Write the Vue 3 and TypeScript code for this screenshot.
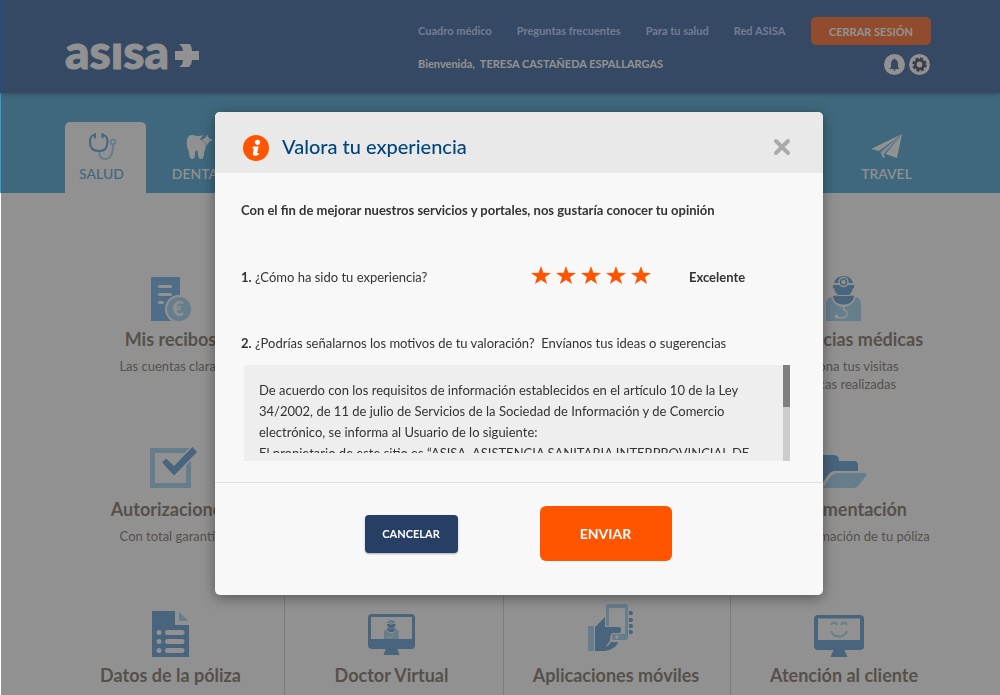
<script setup lang="ts">
import { ref } from 'vue'

interface Tile {
  id: string
  title: string
  lines: string[]
}

const links: string[] = ['Cuadro médico', 'Preguntas frecuentes', 'Para tu salud', 'Red ASISA']

const tiles: Tile[] = [
  { id: 'recibos', title: 'Mis recibos', lines: ['Las cuentas claras'] },
  { id: 'medicas', title: 'Asistencias médicas', lines: ['Gestiona tus visitas', 'médicas realizadas'] },
  { id: 'autorizaciones', title: 'Autorizaciones', lines: ['Con total garantía'] },
  { id: 'documentacion', title: 'Documentación', lines: ['Ver la información de tu póliza'] },
  { id: 'datos', title: 'Datos de la póliza', lines: [] },
  { id: 'doctor', title: 'Doctor Virtual', lines: [] },
  { id: 'apps', title: 'Aplicaciones móviles', lines: [] },
  { id: 'cliente', title: 'Atención al cliente', lines: [] },
]

const ratings: string[] = ['Muy mala', 'Mala', 'Normal', 'Buena', 'Excelente']
const rating = ref<number>(5)
const open = ref<boolean>(true)
const comments = ref<string>(
  [
    'De acuerdo con los requisitos de información establecidos en el artículo 10 de la Ley',
    '34/2002, de 11 de julio de Servicios de la Sociedad de Información y de Comercio',
    'electrónico, se informa al Usuario de lo siguiente:',
    'El propietario de este sitio es “ASISA, ASISTENCIA SANITARIA INTERPROVINCIAL DE',
  ].join('\n'),
)
</script>

<template>
  <div class="page">
    <header class="top">
      <a class="logo" href="#" aria-label="asisa">
        <span class="logo-name">asısa</span>
        <svg class="logo-mark" viewBox="0 0 24 23" aria-hidden="true">
          <path d="M4 0H15Q17 3 17 7H24V16H17Q17 20 14 23H4Q8 21 8 16H0V7H8Q8 3 4 0Z" fill="#fff" />
        </svg>
      </a>
      <div class="account">
        <nav class="links">
          <a v-for="link in links" :key="link" href="#">{{ link }}</a>
        </nav>
        <p class="welcome">Bienvenida,&nbsp; TERESA CASTAÑEDA ESPALLARGAS</p>
      </div>
      <div class="session">
        <button type="button" class="logout">CERRAR SESIÓN</button>
        <div class="round-buttons">
          <button type="button" aria-label="Avisos">
            <svg viewBox="0 0 21 21">
              <circle cx="10.5" cy="10.5" r="10.5" fill="#fff" />
              <path d="M10.5 4.500Q11.500 4.500 11.400 5.600Q14 6.500 14 10V13L15.500 15H5.500L7 13V10Q7 6.500 9.600 5.600Q9.500 4.500 10.500 4.500ZM9 15.600H12Q11.700 17 10.500 17T9 15.600Z" fill="#1f4e90" />
            </svg>
          </button>
          <button type="button" aria-label="Ajustes">
            <svg viewBox="0 0 21 21">
              <circle cx="10.5" cy="10.5" r="10.5" fill="#fff" />
              <circle cx="10.5" cy="10.5" r="4.300" fill="none" stroke="#20324f" stroke-width="2.800" />
              <circle cx="10.5" cy="10.5" r="6.200" fill="none" stroke="#20324f" stroke-width="2" stroke-dasharray="2.870 2" />
            </svg>
          </button>
        </div>
      </div>
    </header>

    <nav class="tabs">
      <a class="tab active" href="#">
        <svg class="tab-icon" viewBox="0 0 28 28" fill="none" stroke-linecap="round">
          <path d="M10 18Q10 26 16 26Q24 26 24 12" stroke="#97cef3" stroke-width="2" />
          <circle cx="24" cy="9" r="2.300" stroke="#97cef3" stroke-width="1.800" />
          <path d="M6 2.500H3.500Q1 4 1 9Q1 18 10 18Q18.500 18 18.500 9Q18.500 4 16 2.500H13.500M6 1V4.500M13.500 1V4.500" stroke="#379cd0" stroke-width="2" />
        </svg>
        <span>SALUD</span>
      </a>
      <a class="tab" href="#">
        <svg class="tab-icon" viewBox="0 0 28 28" fill="#fff">
          <path d="M2 4Q4 1 9 2.500Q13 4 17 2L14 6.500L19 9.500L20 13Q19 17 18 20Q18 26 15 26Q12 26 12 21Q12 17.500 10.500 17.500T9 21Q9 26 6 26Q3 26 3 19Q0 13 1 7Z" />
          <path d="M21 1Q21.500 5.500 27 7Q22 8.500 21 13Q20 8.500 15 7Q20.500 5.500 21 1Z" />
        </svg>
        <span>DENTAL</span>
      </a>
      <a class="tab last" href="#">
        <svg class="tab-icon plane" viewBox="0 0 32 28" fill="#fff">
          <path d="M0 16L31 1L8 18Z" />
          <path d="M31 1L9.500 19L12 25L14 24.500L13 21L29 3Z" opacity=".85" />
          <path d="M31 1L26 25L14.500 21Z" />
        </svg>
        <span>TRAVEL</span>
      </a>
    </nav>

    <main class="tiles">
      <a v-for="tile in tiles" :key="tile.id" class="tile" :class="tile.id" href="#">
        <span class="tile-icon">
          <svg v-if="tile.id === 'recibos'" width="40" height="44" viewBox="0 0 40 44">
            <path d="M0 1Q0 0 1 0H28Q29 0 29 1V44H0Z" fill="#5fa6e6" />
            <path d="M8.500 9.500H19.500M8.500 17.500H19.500M8.500 25.500H11.500" stroke="#fff" stroke-width="3" stroke-linecap="round" />
            <circle cx="28" cy="32" r="13" fill="#97cef3" stroke="#fff" stroke-width="2" />
            <text x="27" y="39" text-anchor="middle" font-family="Lato, sans-serif" font-size="20" font-weight="700" fill="#fff">€</text>
          </svg>
          <svg v-else-if="tile.id === 'medicas'" width="36" height="45" viewBox="0 0 36 45">
            <use href="#doctor-figure" />
          </svg>
          <svg v-else-if="tile.id === 'autorizaciones'" class="raised" width="53" height="42" viewBox="-6 0 53 42">
            <rect x="2.500" y="3.500" width="36" height="35" fill="none" stroke="#97cef3" stroke-width="5" />
            <path d="M12 15.500L16 11.500L24 19L42.500 0L47 5L24 28.500Z" fill="#5090ce" stroke="#fff" stroke-width="3" paint-order="stroke" />
          </svg>
          <svg v-else-if="tile.id === 'documentacion'" class="raised" width="46" height="34" viewBox="0 0 46 34">
            <path d="M0 30V3Q0 0 3 0H13Q18 0 18 6H33Q37 6 37 10V16H14Q10 16 7 20L0 30Z" fill="#5090ce" />
            <path d="M2 33L10 21Q13 18 16 18H43Q47 18 45 21L37 31Q35 33 32 33Z" fill="#97cef3" />
          </svg>
          <svg v-else-if="tile.id === 'datos'" width="37" height="46" viewBox="0 0 37 46">
            <path d="M0 0H23V14H37V46H0Z" fill="#5090ce" />
            <path d="M27 1L36.500 10H27Z" fill="#97cef3" />
            <g stroke="#fff" stroke-width="5" stroke-linecap="round">
              <path d="M7 21.500H7.010M15.500 21.500H30M7 30.500H7.010M15.500 30.500H30M7 39.500H7.010M15.500 39.500H30" />
            </g>
          </svg>
          <svg v-else-if="tile.id === 'doctor'" class="raised" width="47" height="41" viewBox="0 0 47 41">
            <rect width="47" height="35" rx="4" fill="#5090ce" />
            <path d="M18 34H29L31.500 41H15.500Z" fill="#5090ce" />
            <rect x="3" y="3" width="41" height="22" fill="#fff" />
            <svg x="16" y="6" width="15" height="19" viewBox="0 0 36 45"><use href="#doctor-figure" /></svg>
          </svg>
          <svg v-else-if="tile.id === 'apps'" class="raised-more" width="46" height="47" viewBox="0 0 46 47">
            <rect x="0" y="22" width="6" height="25" rx="1" fill="#97cef3" />
            <path d="M7 23L17 13V23H31Q33 23 33 26T31 29H24Q22 31 22 37L18 42Q20 43 23 38H30Q29 42 25 44Q21 47 17 47H7Z" fill="#5090ce" />
            <path d="M20 0H37Q40 0 40 3V33Q40 36 37 36H24V30H32Q34 29 34 26Q34 22 31 22H18V2Q18 0 20 0Z" fill="#97cef3" />
            <path d="M21 4H37V30H32Q34 29 34 26Q34 22 31 22H21Z" fill="#fff" />
            <circle cx="29" cy="33" r="1.800" fill="#fff" />
            <path d="M41 7H43A2 2 0 0 1 43 11H41ZM41 14H43A2 2 0 0 1 43 18H41ZM41 20H43A2 2 0 0 1 43 24H41ZM41 26H43A2 2 0 0 1 43 30H41Z" fill="#5090ce" />
          </svg>
          <svg v-else width="50" height="42" viewBox="0 0 50 42">
            <rect width="50" height="35" rx="4" fill="#5090ce" />
            <path d="M20 34H30L33.500 42H16.500Z" fill="#5090ce" />
            <rect x="4" y="3.500" width="42" height="21.500" fill="#fff" />
            <path d="M17.500 10Q17.500 7.500 20 7.500T22.500 10M27.500 10Q27.500 7.500 30 7.500T32.500 10M17 16Q19 21.500 25 21.500T33 16" fill="none" stroke="#97cef3" stroke-width="2" />
          </svg>
        </span>
        <strong>{{ tile.title }}</strong>
        <span v-for="line in tile.lines" :key="line" class="tile-line">{{ line }}</span>
      </a>
    </main>

    <svg class="symbols" aria-hidden="true">
      <defs>
        <g id="doctor-figure">
          <path d="M0 45V28Q0 22 6 21H29Q35 22 35 28V45Z" fill="#97cef3" />
          <circle cx="17.500" cy="18.500" r="12.500" fill="#fff" />
          <path d="M8 7Q10 0 17.500 0T27 7Z" fill="#5090ce" />
          <path d="M7 9H28V12H27Q26 17 23 19H12Q9 17 8 12H7Z" fill="#5090ce" />
          <path d="M7 20Q12 19 12 20H23Q25 19 28 20Q28 24 24 27Q17.500 30 11 27Q7 24 7 20Z" fill="#5090ce" />
          <circle cx="17.500" cy="6" r="4.500" fill="#5090ce" stroke="#fff" stroke-width="1.500" />
          <circle cx="17.500" cy="6" r="2.200" fill="#fff" />
          <path d="M17.500 31Q17 34 20 35Q23 38 19 41Q15 43 11 41" fill="none" stroke="#fff" stroke-width="1.500" />
          <circle cx="10.500" cy="40.500" r="2" fill="#fff" />
        </g>
      </defs>
    </svg>

    <div v-if="open" class="overlay">
      <form class="dialog" role="dialog" aria-labelledby="dialog-title" @submit.prevent="open = false">
        <div class="dialog-head">
          <svg class="info" viewBox="0 0 25 25" aria-hidden="true">
            <circle cx="12.500" cy="12.500" r="12.500" fill="#ff5500" />
            <circle cx="14" cy="7" r="2.500" fill="#fff" />
            <path d="M9.500 11H15L13.500 17.500H15.500L15 19Q13.500 20 11.500 20Q9 20 9.500 17.500L10.500 13H9Z" fill="#fff" />
          </svg>
          <h1 id="dialog-title">Valora tu experiencia</h1>
          <button type="button" class="close" aria-label="Cerrar" @click="open = false">
            <svg viewBox="0 0 20 20"><path d="M4 4L16 16M16 4L4 16" stroke="#ababab" stroke-width="4" stroke-linecap="round" /></svg>
          </button>
        </div>
        <div class="dialog-body">
          <p class="intro">Con el fin de mejorar nuestros servicios y portales, nos gustaría conocer tu opinión</p>
          <div class="question" role="radiogroup" aria-labelledby="q-rating">
            <span id="q-rating" class="question-text"><b>1.</b> ¿Cómo ha sido tu experiencia?</span>
            <span class="stars">
              <label v-for="(name, i) in ratings" :key="name" :class="{ on: i < rating }">
                <input v-model="rating" type="radio" name="rating" :value="i + 1" :aria-label="name" />
                <svg viewBox="0 0 20 18"><path d="M10 0L12.400 6.800L20 6.900L13.900 11.200L16.100 18L10 13.900L3.900 18L6.100 11.200L0 6.900L7.600 6.800Z" fill="currentColor" /></svg>
              </label>
            </span>
            <output class="rating-name">{{ ratings[rating - 1] }}</output>
          </div>
          <label class="comment-label" for="comments"><b>2.</b> ¿Podrías señalarnos los motivos de tu valoración?&nbsp; Envíanos tus ideas o sugerencias</label>
          <div class="comment-box">
            <textarea id="comments" v-model="comments" spellcheck="false"></textarea>
            <div class="track"><div class="thumb"></div></div>
          </div>
        </div>
        <div class="dialog-foot">
          <button type="button" class="cancel" @click="open = false">CANCELAR</button>
          <button type="submit" class="send">ENVIAR</button>
        </div>
      </form>
    </div>
  </div>
</template>

<style>
body {
  margin: 0;
  overflow: hidden;
}
</style>

<style scoped>
.page {
  min-height: 100vh;
  background: #fff;
  font-family: Lato, "Open Sans", sans-serif;
  font-size: 13px;
  color: #333;
}
.page * {
  box-sizing: border-box;
}
button {
  font-family: inherit;
  border: 0;
  padding: 0;
  cursor: pointer;
}
a {
  color: inherit;
  text-decoration: none;
}
svg {
  display: block;
}
.symbols {
  position: absolute;
  width: 0;
  height: 0;
}

.top {
  position: relative;
  z-index: 1;
  display: grid;
  grid-template-columns: 353px 1fr 120px;
  height: 93px;
  padding: 17px 69px 0 65px;
  background: #1f4e90;
  box-shadow: 0 1px 4px rgba(0, 0, 0, 0.5);
  color: #fff;
}
.logo {
  display: flex;
  align-items: flex-start;
  align-self: start;
  gap: 6px;
  padding-top: 22px;
}
.logo-name {
  font-size: 48px;
  font-weight: 900;
  line-height: 24px;
  padding-bottom: 9px;
  -webkit-text-stroke: 1px #fff;
}
.logo-mark {
  width: 24px;
  height: 23px;
  margin-top: 5px;
}
.account {
  font-size: 11px;
  font-weight: 700;
}
.links {
  display: flex;
  gap: 25px;
  line-height: 28px;
  color: #b0cbfc;
}
.welcome {
  margin: 5px 0 0;
  line-height: 28px;
}
.logout {
  display: block;
  width: 100%;
  height: 28px;
  border-radius: 5px;
  background: #ff570b;
  color: #fff;
  font-size: 11px;
  font-weight: 700;
}
.round-buttons {
  display: flex;
  justify-content: flex-end;
  gap: 4px;
  margin-top: 9px;
  padding-right: 1px;
}
.round-buttons button {
  width: 21px;
  height: 21px;
  background: none;
}

.tabs {
  display: flex;
  align-items: flex-end;
  gap: 16px;
  height: 100px;
  padding: 0 73px 0 65px;
  background: #379cd0;
  color: #fff;
}
.tab {
  display: flex;
  flex-direction: column;
  align-items: center;
  width: 81px;
  height: 71px;
  padding-top: 11px;
  border-radius: 5px 5px 0 0;
  font-size: 14px;
  font-weight: 500;
  line-height: 26px;
}
.tab span {
  margin-right: 8px;
}
.tab.active {
  background: #fff;
  color: #379cd0;
}
.tab.last {
  margin-left: auto;
}
.tab.last span {
  margin-right: 0;
}
.tab-icon {
  width: 28px;
  height: 28px;
  margin-left: -6px;
}
.tab-icon.plane {
  width: 32px;
  margin-left: 0;
}

.tiles {
  display: grid;
  grid-template-columns: 227fr 219fr 227fr 227fr;
  grid-template-rows: 170px 166px 112px;
  padding: 54px 43px 0 57px;
}
.tile {
  display: flex;
  flex-direction: column;
  align-items: center;
  padding-top: 20px;
  white-space: nowrap;
  color: #705f52;
  font-size: 13px;
}
.tile-icon {
  display: flex;
  align-items: flex-end;
  height: 54px;
  margin-bottom: 6px;
}
.tile strong {
  font-size: 18px;
  line-height: 24px;
  margin-bottom: 6px;
}
.tile-line {
  line-height: 18px;
}
.recibos { grid-area: 1 / 1; }
.medicas { grid-area: 1 / 4; }
.autorizaciones { grid-area: 2 / 1; }
.documentacion { grid-area: 2 / 4; }
.datos { grid-area: 3 / 1; }
.doctor { grid-area: 3 / 2; }
.apps { grid-area: 3 / 3; }
.cliente { grid-area: 3 / 4; }
.doctor,
.apps,
.cliente {
  border-left: 1px solid #ccc;
}
.doctor {
  padding-right: 5px;
}
.apps {
  padding-right: 2px;
}
.apps .tile-icon,
.cliente .tile-icon {
  padding-right: 10px;
}
.raised {
  margin-bottom: 2px;
}
.raised-more {
  margin-bottom: 6px;
}

.overlay {
  position: fixed;
  inset: 0 0 0 1px;
  display: flex;
  justify-content: center;
  align-items: flex-start;
  padding: 112px 0 0 37px;
  background: rgba(70, 70, 70, 0.594);
  z-index: 2;
}
.dialog {
  width: 608px;
  max-width: 100%;
  border-radius: 5px;
  background: #f8f8f8;
  box-shadow: 0 3px 14px rgba(0, 0, 0, 0.4);
  overflow: hidden;
}
.dialog-head {
  display: flex;
  align-items: center;
  height: 61px;
  padding: 10px 31px 0 28px;
  background: #e9e9e9;
}
.info {
  width: 26px;
  height: 26px;
}
h1 {
  flex: 1;
  margin: 0 0 3px 13px;
  font-size: 20px;
  font-weight: 500;
  line-height: 28px;
  color: #00457c;
}
.close {
  width: 20px;
  height: 20px;
  margin-bottom: 2px;
  background: none;
}
.dialog-body {
  padding: 24px 27px 21px 26px;
  line-height: 26px;
}
.intro {
  margin: 0 0 41px;
  font-weight: 700;
}
.question {
  display: flex;
  align-items: center;
  margin-bottom: 40px;
}
.question-text {
  width: 290px;
}
.stars {
  display: flex;
  gap: 5px;
  width: 158px;
  color: #ccc;
}
.stars label {
  position: relative;
  width: 20px;
  height: 22px;
}
.stars label.on {
  color: #ff5500;
}
.stars input {
  position: absolute;
  inset: 0;
  margin: 0;
  opacity: 0;
}
.rating-name {
  font-weight: 700;
}
.comment-label {
  display: block;
  margin-bottom: 9px;
}
.comment-box {
  position: relative;
  display: flex;
  height: 96px;
  margin: 0 6px 0 3px;
  background: #eee;
}
.comment-box::after {
  content: "";
  position: absolute;
  left: 0;
  right: 7px;
  bottom: 0;
  height: 8px;
  background: #eee;
}
textarea {
  flex: 1;
  display: block;
  min-width: 0;
  padding: 15px 0 0 15px;
  border: 0;
  outline: 0;
  resize: none;
  background: none;
  font: inherit;
  line-height: 21px;
  color: #333;
  white-space: pre;
  overflow: hidden;
}
.track {
  width: 7px;
  background: #ccc;
}
.thumb {
  height: 42px;
  background: #7e7e7e;
}
.dialog-foot {
  display: flex;
  justify-content: center;
  align-items: center;
  gap: 82px;
  padding: 23px 2px 34px 0;
  border-top: 1px solid #e2e2e2;
}
.dialog-foot button {
  color: #fff;
  font-weight: 700;
}
.cancel {
  width: 93px;
  height: 38px;
  border-radius: 4px;
  background: #273f64;
  box-shadow: 0 1px 2px rgba(0, 0, 0, 0.3);
  font-size: 11px;
}
.send {
  width: 132px;
  height: 55px;
  border-radius: 6px;
  background: #ff5500;
  font-size: 14px;
}
</style>
